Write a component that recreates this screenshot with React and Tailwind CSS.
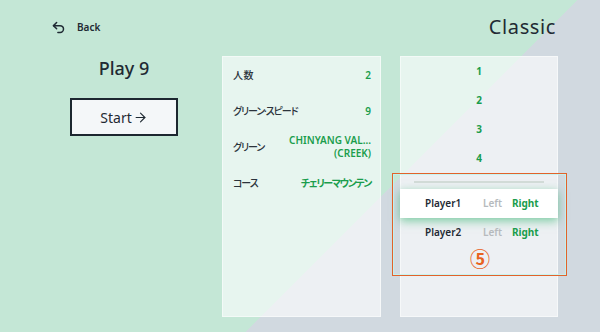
import React from "react";
import { Undo2, ArrowRight } from "lucide-react";

const font = "font-['Noto_Sans','Noto_Sans_CJK_JP',sans-serif]";

function InfoRow({ label, children, kana, labelKana }) {
  return (
    <div className="flex h-[36px] items-center justify-between pl-[10px] pr-[9px]">
      <span
        className={
          "text-[10px] font-medium text-[#2b333b] [font-feature-settings:'palt'] " +
          (labelKana ? "tracking-[-1.1px]" : "tracking-[0.5px]")
        }
      >
        {label}
      </span>
      <span
        className={
          "text-right text-[10px] font-semibold leading-[13px] text-[#1a9d4c] [font-feature-settings:'palt'] " +
          (kana ? "tracking-[-1.4px]" : "")
        }
      >
        {children}
      </span>
    </div>
  );
}

function PlayerRow({ name, active }) {
  return (
    <div
      className={
        "flex h-[29px] items-center pl-[24px] " +
        (active ? "-mx-[1px] bg-white pl-[25px] shadow-[0_3px_9px_rgba(50,180,110,0.6)]" : "")
      }
    >
      <span className="w-[58px] text-[10px] font-semibold text-[#1f2a33]">{name}</span>
      <span className="w-[29px] text-[10px] font-semibold text-[#b6babd]">Left</span>
      <span className="text-[10px] font-bold text-[#1a9d4c]">Right</span>
    </div>
  );
}

export default function App() {
  return (
    <div
      className={
        font +
        " flex h-[332px] w-[600px] flex-col overflow-hidden bg-[linear-gradient(135deg,#c4e7d6_62%,#d1d9e0_62%)] text-[#1f2a33]"
      }
    >
      <div className="flex h-[54px] items-center justify-between pl-[51px] pr-[44px]">
        <div className="flex items-center gap-[11px]">
          <Undo2 size={15} strokeWidth={2.4} className="text-[#1f2a33]" />
          <span className="text-[10px] font-semibold">Back</span>
        </div>
        <span className="text-[20px] font-normal tracking-[0.6px]">Classic</span>
      </div>

      <div className="mt-[2px] flex">
        <div className="ml-[70px] flex w-[108px] flex-col items-center">
          <div className="h-[24px] text-[18px] font-medium leading-[24px]">Play 9</div>
          <button className="mt-[18px] flex h-[38px] w-[108px] items-center justify-center gap-[1px] border-2 border-[#1c2730] bg-[#f4f7f9] text-[14px] font-normal">
            Start
            <ArrowRight size={15} strokeWidth={1.8} />
          </button>
        </div>

        <div className="ml-[44px] h-[261px] w-[159px] border border-white/50 bg-white/60">
          <InfoRow label="人数">2</InfoRow>
          <InfoRow label="グリーン·スピード" labelKana>
            9
          </InfoRow>
          <InfoRow label="グリーン" labelKana>
            CHINYANG VAL...
            <br />
            (CREEK)
          </InfoRow>
          <InfoRow label="コース" labelKana kana>
            チェリーマウンテン
          </InfoRow>
        </div>

        <div className="relative ml-[19px] flex h-[261px] w-[158px] flex-col border border-white/50 bg-white/60">
          {["1", "2", "3", "4"].map((n) => (
            <div key={n} className="flex h-[29px] items-center justify-center text-[10px] font-bold text-[#1a9d4c]">
              {n}
            </div>
          ))}
          <div className="mx-[13px] mt-[8px] h-[2px] bg-[#d3dbd8]" />
          <div className="mt-[6px] flex flex-col">
            <PlayerRow name="Player1" active />
            <PlayerRow name="Player2" />
          </div>

          <div className="pointer-events-none absolute left-[-9px] top-[116px] h-[103px] w-[175px] border-[1.5px] border-[#e2622a] shadow-[inset_0_0_0_1px_rgba(190,245,240,0.8)]">
            <span className="absolute bottom-[5px] left-[77px] font-['Noto_Sans_CJK_JP',sans-serif] text-[20px] font-bold leading-[22px] text-[#e8631f]">
              ⑤
            </span>
          </div>
        </div>
      </div>
    </div>
  );
}
